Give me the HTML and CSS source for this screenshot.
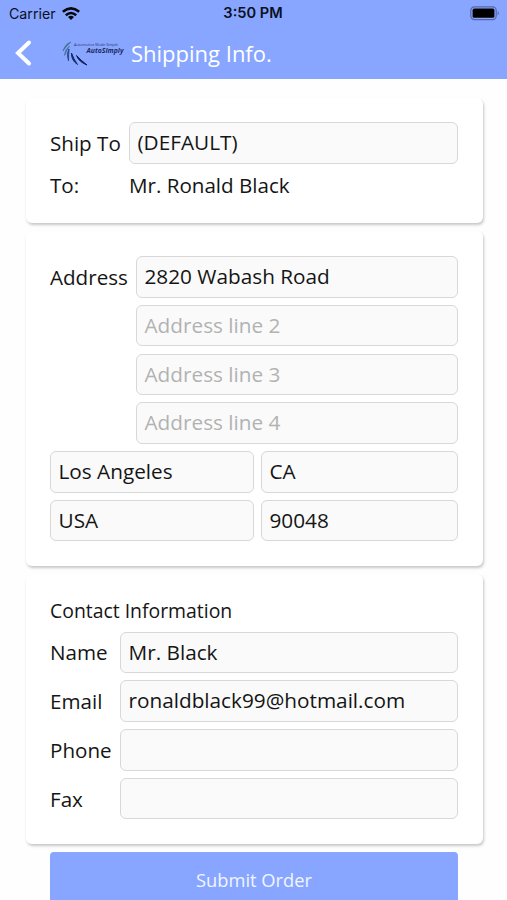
FILE: index.html
```html
<!DOCTYPE html>
<html lang="en">
<head>
<meta charset="utf-8">
<title>Shipping Info.</title>
<link rel="stylesheet" href="styles.css">
</head>
<body>
<header class="top">
  <div class="status">
    <div class="carrier"><span>Carrier</span>
      <svg class="wifi" width="18" height="13" viewBox="0 0 18 13"><g fill="none" stroke="#05070f" stroke-width="2.6"><path d="M.8 4.8 Q9 -2 17.2 4.8"/><path d="M3.8 8.2 Q9 3.8 14.2 8.2"/></g><path d="M6 10 Q9 7.4 12 10 L9 13Z" fill="#05070f"/></svg>
    </div>
    <div class="clock">3:50 PM</div>
    <svg class="battery" width="30" height="15" viewBox="0 0 30 15"><rect x=".8" y=".8" width="25.4" height="12.8" rx="3.6" fill="none" stroke="#5268a8" stroke-width="1.2"/><rect x="2.6" y="2.6" width="21.8" height="9.2" rx="1.6" fill="#000"/><path d="M27.7 5 Q30 7.2 27.7 9.4Z" fill="#5268a8"/></svg>
  </div>
  <div class="nav">
    <svg class="back" width="18" height="28" viewBox="0 0 18 28"><path d="M15 3.5 L4 14 L15 24.5" fill="none" stroke="#fff" stroke-width="4" stroke-linecap="round" stroke-linejoin="miter"/></svg>
    <svg class="logo" width="64" height="28" viewBox="0 0 64 28">
      <path d="M1 11 Q3 4 9 2 Q4 6 1 11Z" fill="#3d7187" stroke="#3d7187" stroke-width=".6"/>
      <path d="M2.5 15.5 Q2.5 10 7.5 6 Q4.5 11 2.5 15.5Z" fill="#456ba5" stroke="#456ba5" stroke-width=".6"/>
      <path d="M6.5 21 Q4 14 7 9 Q6.5 15 6.5 21Z" fill="#284c84" stroke="#284c84" stroke-width=".9"/>
      <path d="M15.5 24.5 Q9 20 9.5 13 Q11.5 19 15.5 24.5Z" fill="#142a68" stroke="#142a68" stroke-width="1"/>
      <path d="M25 25 Q17 22 14.5 15.5 Q19 20.5 25 25Z" fill="#101f56" stroke="#101f56" stroke-width="1"/>
      <text class="tagline" x="12" y="5.5" textLength="44" lengthAdjust="spacingAndGlyphs">Automotive Made Simple</text>
      <text class="brand" x="24.5" y="12.8" textLength="37" lengthAdjust="spacingAndGlyphs">AutoSimply</text>
    </svg>
    <h1>Shipping Info.</h1>
  </div>
</header>
<main>
  <section class="card ship">
    <div class="row"><label>Ship To</label><div class="field">(DEFAULT)</div></div>
    <div class="row plain"><label>To:</label><span>Mr. Ronald Black</span></div>
  </section>
  <section class="card address">
    <div class="row"><label>Address</label><div class="field">2820 Wabash Road</div></div>
    <div class="row"><label></label><div class="field hint">Address line 2</div></div>
    <div class="row"><label></label><div class="field hint">Address line 3</div></div>
    <div class="row"><label></label><div class="field hint">Address line 4</div></div>
    <div class="row pair"><div class="field">Los Angeles</div><div class="field">CA</div></div>
    <div class="row pair"><div class="field">USA</div><div class="field">90048</div></div>
  </section>
  <section class="card contact">
    <h2>Contact Information</h2>
    <div class="row"><label>Name</label><div class="field">Mr. Black</div></div>
    <div class="row"><label>Email</label><div class="field">ronaldblack99@hotmail.com</div></div>
    <div class="row"><label>Phone</label><div class="field"></div></div>
    <div class="row"><label>Fax</label><div class="field"></div></div>
  </section>
  <button class="submit">Submit Order</button>
</main>
</body>
</html>
```
FILE: styles.css
```css
* { box-sizing: border-box; }
body { margin: 0; height: 900px; overflow: hidden; background: #fefefe; color: #151515; font: 20.6px/28px "Open Sans", "Noto Sans", sans-serif; }
.top { height: 79px; background: #88a6ff; }
.status { height: 27px; display: grid; grid-template-columns: 1fr auto 1fr; align-items: center; padding: 0 7px 0 9px; font: 14.2px/27px Inter, sans-serif; color: #0b1024; }
.carrier { display: flex; align-items: center; gap: 6px; }
.wifi { margin-top: -1px; }
.clock { font-weight: 600; font-size: 14.6px; margin-left: -3px; }
.battery { justify-self: end; margin-top: -1px; }
.nav { height: 52px; display: flex; align-items: center; padding-left: 14px; }
.logo { margin: 2px 4px 0 30px; }
.tagline { font: 3.5px "Open Sans", sans-serif; fill: #29396f; }
.brand { font: italic bold 7px "Open Sans", sans-serif; fill: #1c2b63; }
h1 { margin: 0 0 0 1px; font-size: 22px; font-weight: 400; color: #fff; }
main { padding: 19px 24.5px 0 26px; }
.card { background: #fff; border-radius: 6px; padding: 24px 24.5px 0 24px; margin-bottom: 8px; box-shadow: 1px 2px 3px rgba(0,0,0,.22); }
.ship { height: 125px; }
.address { height: 335px; padding-top: 25px; }
.contact { height: 270px; padding-top: 23px; margin-bottom: 8px; }
.row { display: flex; align-items: center; height: 41.5px; margin-bottom: 7.3px; }
.row label { flex: none; }
.ship label { width: 79px; }
.address label { width: 86px; }
.contact label { width: 70px; }
.row.plain { height: 28px; }
.field { flex: 1; height: 41.5px; border: 1.5px solid #d8d8d8; border-radius: 6px; background: #fafafa; padding: 0 7.5px; font-size: 20.75px; line-height: 39.5px; white-space: nowrap; }
.hint { color: #b2b2b2; }
.pair { display: grid; grid-template-columns: 204px 1fr; gap: 7px; }
h2 { margin: 0 0 6.5px; font-size: 19.4px; font-weight: 400; line-height: 28px; }
.submit { display: block; width: 408px; height: 55px; margin-left: 24px; border: 0; border-radius: 4px; background: #88a6ff; color: #f2f5ff; font: 18.3px/55px "Open Sans", sans-serif; padding: 0; }
```
